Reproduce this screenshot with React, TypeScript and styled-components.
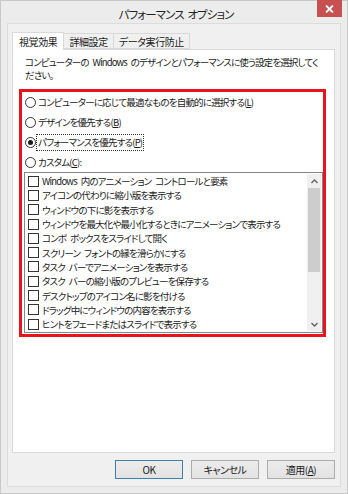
import React from 'react'
import styled, { createGlobalStyle } from 'styled-components'

const GlobalStyle = createGlobalStyle`
  html, body {
    margin: 0;
    padding: 0;
    background: #ffffff;
  }
  body {
    font-family: "Noto Sans CJK JP", "DejaVu Sans", sans-serif;
    font-feature-settings: "palt";
    color: #1a1a1a;
  }
`

const Window = styled.div`
  width: 348px;
  height: 494px;
  box-sizing: border-box;
  background: #ececec;
  border: 1px solid #c8c8c8;
  display: flex;
  flex-direction: column;
`

const TitleBar = styled.div`
  height: 22px;
  display: flex;
  align-items: flex-start;
  position: relative;
`

const Title = styled.div`
  flex: 1;
  text-align: center;
  font-size: 11.5px;
  letter-spacing: -0.9px;
  word-spacing: 2px;
  line-height: 27px;
  color: #222;
  padding-left: 4px;
`

const CloseButton = styled.div`
  position: absolute;
  top: -1px;
  right: 5px;
  width: 25px;
  height: 17px;
  background: #c75050;
  display: flex;
  align-items: center;
  justify-content: center;
`

const Client = styled.div`
  flex: 1;
  margin: 0 6px 6px 6px;
  background: #f0f0f0;
  border: 1px solid #dcdcdc;
  padding: 7px 5px 7px 4px;
  display: flex;
  flex-direction: column;
`

const TabStrip = styled.div`
  display: flex;
  align-items: flex-end;
  height: 18px;
  position: relative;
  z-index: 1;
`

const Tab = styled.div<{ $active?: boolean }>`
  box-sizing: border-box;
  height: ${(p) => (p.$active ? '18px' : '16px')};
  padding: 0 ${(p) => (p.$active ? '6px' : '5px')};
  margin-bottom: ${(p) => (p.$active ? '-1px' : '0')};
  background: ${(p) => (p.$active ? '#ffffff' : '#f0f0f0')};
  border: 1px solid #d9d9d9;
  border-bottom: ${(p) => (p.$active ? 'none' : '1px solid #d9d9d9')};
  margin-left: ${(p) => (p.$active ? '0' : '-1px')};
  font-size: 10px;
  letter-spacing: -0.4px;
  line-height: ${(p) => (p.$active ? '18px' : '15px')};
  color: #1a1a1a;
  white-space: nowrap;
`

const Panel = styled.div`
  flex: 1;
  background: #ffffff;
  border: 1px solid #d9d9d9;
  padding: 6px 8px 0 6px;
  display: flex;
  flex-direction: column;
`

const Description = styled.div`
  font-size: 9.5px;
  letter-spacing: -0.85px;
  word-spacing: 2.5px;
  line-height: 13px;
  padding-left: 6px;
  white-space: nowrap;
`

const Highlight = styled.div`
  margin-top: 7px;
  border: 3px solid #e8141c;
  padding: 0 0 1px 2px;
  height: 248px;
  box-sizing: border-box;
  display: flex;
  flex-direction: column;
`

const RadioRow = styled.label`
  height: 20px;
  flex: none;
  display: flex;
  align-items: center;
  font-size: 9.5px;
  letter-spacing: -0.8px;
  white-space: nowrap;
`

const RadioCircle = styled.span<{ $checked?: boolean }>`
  width: 11px;
  height: 11px;
  box-sizing: border-box;
  border-radius: 50%;
  border: 1px solid #333;
  background: #fff;
  margin: 0 1px 0 1px;
  flex: none;
  display: flex;
  align-items: center;
  justify-content: center;
  &::after {
    content: '';
    width: 5px;
    height: 5px;
    border-radius: 50%;
    background: ${(p) => (p.$checked ? '#1a1a1a' : 'transparent')};
  }
`

const RadioText = styled.span<{ $focused?: boolean }>`
  padding: 0 1px;
  line-height: 15px;
  outline: ${(p) => (p.$focused ? '1px dotted #333' : 'none')};
`

const Key = styled.span`
  text-decoration: underline;
`

const ListBox = styled.div`
  flex: 1;
  border: 1px solid #828790;
  background: #fff;
  display: flex;
  min-height: 0;
`

const Items = styled.div`
  flex: 1;
  padding: 1px 0 0 3px;
  overflow: hidden;
`

const Item = styled.div`
  height: 14.3px;
  display: flex;
  align-items: center;
  font-size: 9.5px;
  letter-spacing: -0.8px;
  word-spacing: 2.5px;
  white-space: pre;
`

const CheckBox = styled.span`
  width: 9px;
  height: 9px;
  border: 1px solid #333;
  background: #fff;
  margin-right: 3px;
  flex: none;
`

const ScrollBar = styled.div`
  width: 14px;
  display: flex;
  flex-direction: column;
  background: #f0f0f0;
  margin: 1px 1px 1px 0;
`

const ScrollArrow = styled.div`
  height: 14px;
  display: flex;
  align-items: center;
  justify-content: center;
  background: #f0f0f0;
`

const ScrollThumb = styled.div`
  height: 84px;
  background: #cdcdcd;
  margin: 0 1px;
`

const ScrollTrack = styled.div`
  flex: 1;
`

const ButtonRow = styled.div`
  display: flex;
  justify-content: flex-end;
  gap: 8px;
  margin-top: 7px;
`

const Button = styled.div<{ $default?: boolean }>`
  width: 68px;
  height: 19px;
  box-sizing: border-box;
  border: 1px solid ${(p) => (p.$default ? '#3c7fb1' : '#acacac')};
  background: linear-gradient(#ececec, #e2e2e2);
  display: flex;
  align-items: center;
  justify-content: center;
  font-size: 10px;
  letter-spacing: -0.5px;
  color: #1a1a1a;
`

const effects = [
  'Windows 内のアニメーション コントロールと要素',
  'アイコンの代わりに縮小版を表示する',
  'ウィンドウの下に影を表示する',
  'ウィンドウを最大化や最小化するときにアニメーションで表示する',
  'コンボ ボックスをスライドして開く',
  'スクリーン フォントの縁を滑らかにする',
  'タスク バーでアニメーションを表示する',
  'タスク バーの縮小版のプレビューを保存する',
  'デスクトップのアイコン名に影を付ける',
  'ドラッグ中にウィンドウの内容を表示する',
  'ヒントをフェードまたはスライドで表示する',
]

function Chevron({ up }: { up?: boolean }) {
  return (
    <svg width='7' height='5' viewBox='0 0 7 5'>
      <path
        d={up ? 'M0.5 4 L3.5 1 L6.5 4' : 'M0.5 1 L3.5 4 L6.5 1'}
        stroke='#606060'
        strokeWidth='1.3'
        fill='none'
      />
    </svg>
  )
}

function App() {
  return (
    <>
      <GlobalStyle />
      <Window>
        <TitleBar>
          <Title>パフォーマンス オプション</Title>
          <CloseButton>
            <svg width='9' height='8' viewBox='0 0 9 8'>
              <path d='M1 0.5 L8 7.5 M8 0.5 L1 7.5' stroke='#fff' strokeWidth='1.8' />
            </svg>
          </CloseButton>
        </TitleBar>
        <Client>
          <TabStrip>
            <Tab $active>視覚効果</Tab>
            <Tab>詳細設定</Tab>
            <Tab>データ実行防止</Tab>
          </TabStrip>
          <Panel>
            <Description>
              コンピューターの Windows のデザインとパフォーマンスに使う設定を選択してく
              <br />
              ださい。
            </Description>
            <Highlight>
              <RadioRow>
                <RadioCircle />
                <RadioText>
                  コンピューターに応じて最適なものを自動的に選択する(<Key>L</Key>)
                </RadioText>
              </RadioRow>
              <RadioRow>
                <RadioCircle />
                <RadioText>
                  デザインを優先する(<Key>B</Key>)
                </RadioText>
              </RadioRow>
              <RadioRow>
                <RadioCircle $checked />
                <RadioText $focused>
                  パフォーマンスを優先する(<Key>P</Key>)
                </RadioText>
              </RadioRow>
              <RadioRow>
                <RadioCircle />
                <RadioText>
                  カスタム(<Key>C</Key>):
                </RadioText>
              </RadioRow>
              <ListBox>
                <Items>
                  {effects.map((label) => (
                    <Item key={label}>
                      <CheckBox />
                      {label}
                    </Item>
                  ))}
                </Items>
                <ScrollBar>
                  <ScrollArrow>
                    <Chevron up />
                  </ScrollArrow>
                  <ScrollThumb />
                  <ScrollTrack />
                  <ScrollArrow>
                    <Chevron />
                  </ScrollArrow>
                </ScrollBar>
              </ListBox>
            </Highlight>
          </Panel>
          <ButtonRow>
            <Button $default>OK</Button>
            <Button>キャンセル</Button>
            <Button>
              適用(<Key>A</Key>)
            </Button>
          </ButtonRow>
        </Client>
      </Window>
    </>
  )
}

export default App
